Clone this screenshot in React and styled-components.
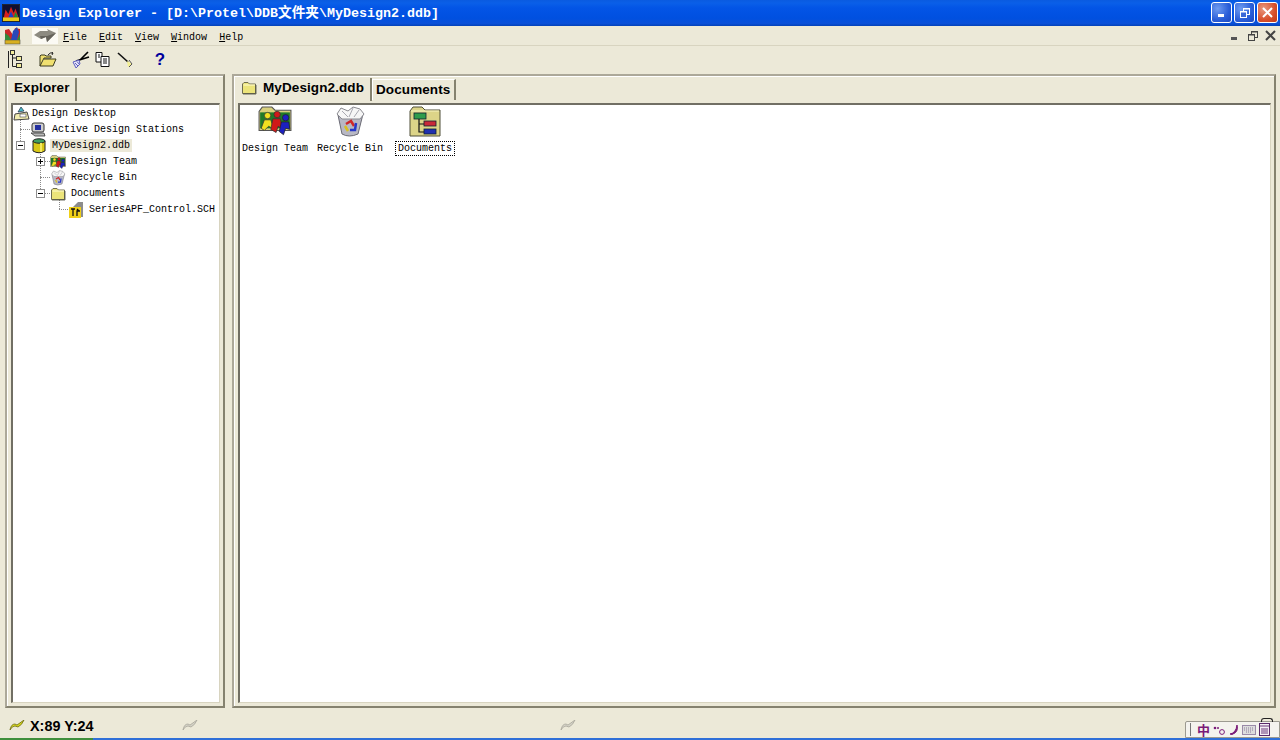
import React from "react";
import styled, { createGlobalStyle } from "styled-components";

const Global = createGlobalStyle`
  html, body { margin: 0; padding: 0; width: 1280px; height: 740px; overflow: hidden; background: #ece9d8; }
  #root { width: 1280px; height: 740px; }
  * { box-sizing: border-box; }
`;

const Shell = styled.div`
  width: 1280px; height: 740px; display: flex; flex-direction: column;
  background: #ece9d8; font-family: "Liberation Mono", "Noto Sans CJK SC", monospace; color: #000;
`;
const TitleBar = styled.div`
  height: 26px; flex: none; display: flex; align-items: center; padding: 0 2px 1px 2px;
  background: linear-gradient(180deg, #0a5be0 0%, #0a5fe8 12%, #0355e6 30%, #0050e0 70%, #0a50d8 90%, #0442b8 100%);
`;
const TitleText = styled.div`
  margin-left: 2px; flex: 1; color: #fff; font-weight: 700; font-size: 13.33px; white-space: pre;
  line-height: 16px;
  & > span { font-family: "Noto Sans CJK SC", sans-serif; font-size: 13.7px; }
`;
const WinBtns = styled.div`display: flex; gap: 2px;`;
const WinBtn = styled.div`
  width: 21px; height: 21px; border: 1px solid #fff; border-radius: 3px; display: flex; align-items: center; justify-content: center;
  background: ${p => p.$close ? "radial-gradient(circle at 30% 30%, #e89a80, #d8502c 60%, #c03a18)" : "radial-gradient(circle at 30% 30%, #6f9cf0, #2a5ed8 60%, #1c48c0)"};
`;
const MenuRow = styled.div`
  height: 20px; flex: none; display: flex; align-items: center; padding: 0 0 0 4px;
  border-bottom: 1px solid #d8d4c0;
`;
const Grip = styled.div`
  width: 26px; height: 16px; margin-left: 10px; background: #fbfaf4; display: flex; align-items: center; justify-content: center;
`;
const MenuItem = styled.span`
  font-size: 10px; margin-left: ${p => p.$ml || 12}px; padding-top: 4px; line-height: 12px; white-space: pre;
  & > u { text-underline-offset: 1px; }
`;
const MdiBtns = styled.div`margin-left: auto; display: flex; gap: 3px; align-items: center; padding-right: 2px;`;
const MdiBtn = styled.div`width: 15px; height: 15px; display: flex; align-items: center; justify-content: center;`;
const Toolbar = styled.div`
  height: 28px; flex: none; display: flex; align-items: center; padding-left: 6px; padding-bottom: 1px;
`;
const Tool = styled.div`width: 18px; height: 20px; margin-left: ${p => p.$ml || 0}px; display: flex; align-items: center; justify-content: center;
  color: #00009c; font: 700 17px "Liberation Sans", sans-serif;`;
const Main = styled.div`flex: 1; min-height: 0; display: flex; padding: 0 4px 0 5px; gap: 7px;`;
const Panel = styled.div`
  width: ${p => p.$w}; flex: ${p => p.$grow ? 1 : "none"}; display: flex; flex-direction: column;
  padding: 2px 3px 3px 2px;
  border-top: 2px solid #aca899; border-left: 2px solid #aca899; border-right: 2px solid #85826f; border-bottom: 2px solid #85826f;
  box-shadow: inset 1px 1px 0 #fff;
`;
const Tabs = styled.div`height: 23px; flex: none; display: flex; align-items: flex-end;`;
const Tab = styled.div`
  height: ${p => p.$active ? 23 : 21}px; display: flex; align-items: center;
  padding: 0 0 ${p => p.$active ? 4 : 1}px ${p => p.$pl || 5}px; gap: 6px;
  width: ${p => p.$w}px; flex: none; margin-bottom: ${p => p.$active ? 0 : 1}px;
  font: 700 13.5px "Liberation Sans", sans-serif; letter-spacing: .1px; white-space: pre;
  border-top: ${p => p.$active ? "0" : "1px solid #fff"}; border-left: ${p => p.$active ? "0" : "1px solid #fff"}; border-right: 2px solid #85826f;
`;
const Well = styled.div`
  flex: 1; min-height: 0; background: #fff; margin: 2px 0 0 2px;
  border-top: 2px solid #716f64; border-left: 2px solid #716f64; border-right: 1px solid #d8d4c0; border-bottom: 1px solid #d8d4c0;
`;
const Tree = styled.div`display: flex; flex-direction: column; padding: 1px 0 0 0; position: relative;`;
const TreeRow = styled.div`height: 16px; display: flex; align-items: center; padding-left: ${p => p.$x}px; position: relative;`;
const Label = styled.span`
  font-size: 10px; margin: 0 0 2px ${p => p.$ml || 0}px; padding: 0 ${p => p.$sel ? 2 : 1}px; line-height: 13px; white-space: pre; background: ${p => p.$sel ? "#ece9d8" : "transparent"};
`;
const Guide = styled.i`
  position: absolute; left: ${p => p.$x}px; top: ${p => p.$y}px; width: ${p => p.$w || 1}px; height: ${p => p.$h || 1}px;
  ${p => p.$w ? "border-top: 1px dotted #8a8a8a;" : "border-left: 1px dotted #8a8a8a;"}
`;
const Expander = styled.span`
  position: absolute; left: ${p => p.$x}px; top: 3px; width: 9px; height: 9px; background: #fff; border: 1px solid #8f8f8f; z-index: 1;
  &::before { content: ""; position: absolute; left: 1px; right: 1px; top: 3px; height: 1px; background: #000; }
  ${p => p.$plus ? `&::after { content: ""; position: absolute; top: 1px; bottom: 1px; left: 3px; width: 1px; background: #000; }` : ""}
`;
const IconGrid = styled.div`display: flex; gap: 5px; padding-top: 1px;`;
const IconCell = styled.div`width: 70px; display: flex; flex-direction: column; align-items: center;`;
const IconBox = styled.div`height: 35px; display: flex; align-items: flex-start; justify-content: center;`;
const IconLabel = styled.span`
  font-size: 10px; line-height: 13px; margin-top: 1px; white-space: pre; padding: 0 2px;
  outline: ${p => p.$focus ? "1px dotted #000" : "none"};
`;
const Status = styled.div`
  height: 30px; flex: none; display: flex; align-items: center; padding: 5px 0 0 9px; position: relative;
`;
const StatusText = styled.span`font: 700 14.4px "Liberation Sans", sans-serif; margin-left: 5px; width: 152px;`;
const Spacer = styled.div`width: ${p => p.$w}px; flex: none;`;
const ImeBar = styled.div`
  position: absolute; right: 0; bottom: 0; width: 95px; height: 17px; background: #f4f3ee; border: 1px solid #9c9a90; border-radius: 2px 0 0 0;
  display: flex; align-items: center; gap: 3px; padding-left: 4px; z-index: 2;
`;
const ImeHandle = styled.i`width: 2px; height: 13px; border-left: 1px solid #777; margin-right: 2px;`;
const ImeChar = styled.span`font: 700 13px "Noto Sans CJK SC", sans-serif; color: #7a1a78; line-height: 14px;`;
const ImeTab = styled.i`position: absolute; top: -4px; right: 6px; width: 12px; height: 4px; border: 1px solid #222; border-bottom: 0; border-radius: 3px 3px 0 0;`;
const TaskStrip = styled.div`height: 2px; flex: none; display: flex; background: #2f6fd8;`;
const Start = styled.div`width: 93px; background: #3f8f3c;`;

const Logo = ({ s = 18 }) => (
  <svg width={s} height={s} viewBox="0 0 20 20">
    <rect x="1" y="1" width="18" height="14" fill="#101030" />
    <path d="M2 15 L4 6 L7 11 L10 3 L13 10 L15 5 L18 14 V16 H2Z" fill="#d8201c" />
    <path d="M7 15 L10 8 L13 15Z" fill="#1c40c8" />
    <path d="M13 15 L15 9 L18 15Z" fill="#1c9030" />
    <rect x="1" y="15" width="18" height="4" fill="#e8c818" />
    <rect x="0.5" y="0.5" width="19" height="19" fill="none" stroke="#222" />
  </svg>
);
const MenuLogo = () => (
  <svg width="18" height="19" viewBox="0 0 18 19">
    <rect x="1" y="14" width="15" height="4" fill="#d8b020" stroke="#554" strokeWidth=".6" />
    <path d="M1 14 V4 L5 3 L9 9 L11 2 L16 3 V14Z" fill="#c82828" />
    <path d="M7 14 L9 5 L13 1 L15 6 L13 14Z" fill="#2848b8" />
    <path d="M1 14 V7 L5 10 L7 14Z" fill="#2f8a3a" />
    <path d="M13 14 L16 8 V14Z" fill="#2f8a3a" />
  </svg>
);
const ArrowIcon = () => (
  <svg width="24" height="14" viewBox="0 0 24 14">
    <path d="M1 6 L7 2 H15 L14 0 L23 4 L14 13 L13 8 L8 10Z" fill="#8c8a80" />
    <path d="M8 10 L13 8 L14 13 L23 4 L14 7 L7 7Z" fill="#64625a" />
  </svg>
);
const Folder = ({ s = 16, fill = "#ece47a" }) => (
  <svg width={s} height={s * 14 / 16} viewBox="0 0 16 14">
    <path d="M1.5 12.5 V3 L3 1.5 H7 L8.5 3 H14.5 V12.5Z" fill={fill} stroke="#6e6c50" />
    <path d="M2 13 H15 V4" fill="none" stroke="#4a4a3c" strokeWidth=".8" />
    <path d="M2.5 4 H14" stroke="#fffbd0" />
  </svg>
);
const People = ({ s = 16 }) => (
  <svg width={s} height={s * 28 / 32} viewBox="0 0 32 28">
    <path d="M1 23 V5 L4 1 H13 L16 4 H31 V23Z" fill="#d8d07c" stroke="#555" />
    <rect x="2" y="6" width="28" height="15" fill="#1f7a28" />
    <circle cx="9" cy="9" r="3" fill="#f0e020" stroke="#333" strokeWidth=".7" />
    <path d="M3 21 L6 13 H12 L15 22 L10 19 L6 23Z" fill="#f0e020" stroke="#333" strokeWidth=".7" />
    <circle cx="18" cy="8" r="3" fill="#d01818" stroke="#333" strokeWidth=".7" />
    <path d="M12 22 L14 12 H21 L23 22 L19 19 L17 25Z" fill="#d01818" stroke="#333" strokeWidth=".7" />
    <circle cx="26" cy="11" r="3" fill="#1c20c0" stroke="#222" strokeWidth=".7" />
    <path d="M20 24 L22 15 H29 L30 22 L26 21 L24 27Z" fill="#1c20c0" stroke="#222" strokeWidth=".7" />
  </svg>
);
const Bin = ({ s = 16 }) => (
  <svg width={s} height={s} viewBox="0 0 32 32">
    <path d="M4 9 L8 28 Q15 32 24 28 L29 8Z" fill="#b8b8c4" stroke="#6a6a74" />
    <path d="M3 8 L7 2 L14 5 L19 1 L26 3 L30 8 L26 13 H8Z" fill="#f6f6f6" stroke="#8a8a90" />
    <path d="M8 5 L14 11 M19 2 L15 11 M25 4 L20 11" stroke="#a8a8b0" />
    <path d="M12 18 L17 15 L20 20" fill="none" stroke="#d02828" strokeWidth="2.5" />
    <path d="M22 17 L21 24 L16 24" fill="none" stroke="#2838c8" strokeWidth="2.5" />
    <path d="M11 20 L14 25" fill="none" stroke="#d8c020" strokeWidth="2.5" />
  </svg>
);
const DocFolder = () => (
  <svg width="34" height="32" viewBox="0 0 34 32">
    <path d="M2 30 V5 L5 1 H14 L17 4 H32 V30Z" fill="#dcd488" stroke="#4e4e38" />
    <path d="M3 5 H31" stroke="#f8f4c0" />
    <rect x="6" y="7" width="12" height="6" fill="#2f9c4c" stroke="#123" strokeWidth=".8" />
    <rect x="16" y="15" width="12" height="5" fill="#c82838" stroke="#123" strokeWidth=".8" />
    <rect x="16" y="23" width="12" height="5" fill="#2030b0" stroke="#123" strokeWidth=".8" />
    <path d="M11 13 V26 H16 M11 18 H16" stroke="#111" fill="none" strokeWidth="1.2" />
  </svg>
);
const Desktop = () => (
  <svg width="18" height="16" viewBox="0 0 18 16">
    <path d="M1 14 L2 8 L14 6 L16 13Z" fill="#f2eeb0" stroke="#444" />
    <rect x="7" y="8" width="6" height="3" fill="#fff" stroke="#444" strokeWidth=".6" />
    <path d="M5 6 L8 1 L11 5Z" fill="#48b8c8" stroke="#234" strokeWidth=".7" />
  </svg>
);
const Station = () => (
  <svg width="18" height="16" viewBox="0 0 18 16">
    <rect x="3" y="1" width="12" height="9" rx="2" fill="#cfcfcf" stroke="#333" />
    <rect x="6" y="3" width="6" height="5" fill="#2430a0" />
    <path d="M2 11 H15 L16 14 H6Z" fill="#b8b8b8" stroke="#333" strokeWidth=".8" />
  </svg>
);
const Cylinder = () => (
  <svg width="14" height="16" viewBox="0 0 14 16">
    <path d="M1 3 V13 Q7 16.5 13 13 V3Z" fill="#d8c818" stroke="#222" />
    <ellipse cx="7" cy="3" rx="6" ry="2.2" fill="#40a060" stroke="#222" />
    <path d="M9 5 V14" stroke="#f4e860" strokeWidth="2" />
  </svg>
);
const Sch = () => (
  <svg width="16" height="16" viewBox="0 0 16 16">
    <path d="M3 6 L9 0 H14 V15 H9Z" fill="#8c8c8c" />
    <rect x="0" y="5" width="12" height="11" fill="#f0d018" />
    <path d="M2 7 H6 M4 7 V14 M8 7 L10 9 M8 14 V9 H11" stroke="#111" strokeWidth="1.3" fill="none" />
  </svg>
);
const TreeIcon = () => (
  <svg width="17" height="19" viewBox="0 0 17 19">
    <rect x="3.5" y="0.5" width="4" height="4" fill="#f4ee9c" stroke="#333" />
    <path d="M1.5 1 V18 M5.5 5 V16.5 H9 M5.5 8 H9" stroke="#222" fill="none" />
    <rect x="9.5" y="6.5" width="5" height="4" fill="#f4ee9c" stroke="#333" />
    <rect x="9.5" y="13.5" width="5" height="4" fill="#f4ee9c" stroke="#333" />
  </svg>
);
const OpenFolder = () => (
  <svg width="18" height="15" viewBox="0 0 18 15">
    <path d="M1 14 V4 L2 3 H6 L7 4 H12 V6 H5 L1 14 L14 14 L17 7 H5" fill="#f0e070" stroke="#3a3a20" />
    <path d="M9 3 Q11 0 14 1 M14 1 L12.5 0 M14 1 L13 3" stroke="#222" fill="none" />
  </svg>
);
const Cut = () => (
  <svg width="18" height="18" viewBox="0 0 18 18">
    <path d="M4 10 L17 6 M8 9 L16 1" stroke="#000" strokeWidth="1.7" />
    <path d="M1 11 L7 9 L8 13 L4 17Z" fill="#e4e4f8" stroke="#6060c0" />
    <path d="M3 12 L6 15 M5 10.5 L7 13" stroke="#6060c0" />
  </svg>
);
const Copy = () => (
  <svg width="15" height="15" viewBox="0 0 15 15">
    <path d="M1 .5 H7 V10 H1Z" fill="#fff" stroke="#111" />
    <path d="M6 4.5 H14 V14.5 H6Z" fill="#fff" stroke="#111" />
    <path d="M3 3 H5 M3 5 H5 M8 7 H12 M8 9 H12 M8 11 H12" stroke="#111" />
  </svg>
);
const Wand = () => (
  <svg width="16" height="16" viewBox="0 0 16 16">
    <path d="M1 1 L11 10" stroke="#111" strokeWidth="1.6" />
    <path d="M10 9 L15 12 L11 15Z" fill="#f4f090" />
    <path d="M12 8 L15 12 L12 15" fill="none" stroke="#555" />
  </svg>
);
const Flag = ({ c = "#d8d81c", d = "#6a6a10" }) => (
  <svg width="16" height="11" viewBox="0 0 16 11">
    <path d="M1 10 Q2 4 6 4 L8 5 L15 0 Q13 5 9 7 L6 6 Q3 6 1 10Z" fill={c} stroke={d} strokeWidth=".8" />
  </svg>
);

const Min = ({ c = "#fff" }) => <svg width="11" height="11" viewBox="0 0 11 11"><rect x="2" y="7" width="6" height="3" fill={c} /></svg>;
const Restore = ({ c = "#fff" }) => <svg width="12" height="12" viewBox="0 0 12 12" fill="none" stroke={c}><rect x="4.5" y="1.5" width="6" height="6" /><rect x="1.5" y="4.5" width="6" height="6" fill={c === "#fff" ? "#3a68d8" : "#ece9d8"} /><path d="M4 2 H11 M1 5 H8" strokeWidth="1" /></svg>;
const Cross = ({ c = "#fff", w = 2 }) => <svg width="13" height="13" viewBox="0 0 13 13" stroke={c} strokeWidth={w}><path d="M2 2 L11 11 M11 2 L2 11" /></svg>;

export default function App() {
  return (
    <Shell>
      <Global />
      <TitleBar>
        <Logo />
        <TitleText>Design Explorer - [D:\Protel\DDB<span>文件夹</span>\MyDesign2.ddb]</TitleText>
        <WinBtns>
          <WinBtn><Min /></WinBtn>
          <WinBtn><Restore /></WinBtn>
          <WinBtn $close><Cross /></WinBtn>
        </WinBtns>
      </TitleBar>
      <MenuRow>
        <MenuLogo />
        <Grip><ArrowIcon /></Grip>
        <MenuItem $ml={5}><u>F</u>ile</MenuItem>
        <MenuItem><u>E</u>dit</MenuItem>
        <MenuItem><u>V</u>iew</MenuItem>
        <MenuItem><u>W</u>indow</MenuItem>
        <MenuItem><u>H</u>elp</MenuItem>
        <MdiBtns>
          <MdiBtn><Min c="#555" /></MdiBtn>
          <MdiBtn><Restore c="#444" /></MdiBtn>
          <MdiBtn><Cross c="#444" /></MdiBtn>
        </MdiBtns>
      </MenuRow>
      <Toolbar>
        <Tool><TreeIcon /></Tool>
        <Tool $ml={15}><OpenFolder /></Tool>
        <Tool $ml={15}><Cut /></Tool>
        <Tool $ml={3}><Copy /></Tool>
        <Tool $ml={5}><Wand /></Tool>
        <Tool $ml={17}>?</Tool>
      </Toolbar>
      <Main>
        <Panel $w="220px">
          <Tabs><Tab $active $w={68} $pl={5}>Explorer</Tab></Tabs>
          <Well>
            <Tree>
              <Guide $x={7} $y={15} $h={21} />
              <Guide $x={7} $y={24} $w={10} />
              <Guide $x={27} $y={45} $h={43} />
              <Guide $x={27} $y={56} $w={10} />
              <Guide $x={27} $y={72} $w={10} />
              <Guide $x={27} $y={88} $w={10} />
              <Guide $x={46} $y={94} $h={10} />
              <Guide $x={46} $y={104} $w={9} />
              <TreeRow $x={0}><Desktop /><Label>Design Desktop</Label></TreeRow>
              <TreeRow $x={16}><Station /><Label $ml={4}>Active Design Stations</Label></TreeRow>
              <TreeRow $x={19}><Expander $x={3} /><Cylinder /><Label $sel $ml={4}>MyDesign2.ddb</Label></TreeRow>
              <TreeRow $x={37}><Expander $plus $x={23} /><People /><Label $ml={4}>Design Team</Label></TreeRow>
              <TreeRow $x={37}><Bin /><Label $ml={4}>Recycle Bin</Label></TreeRow>
              <TreeRow $x={37}><Expander $x={23} /><Folder /><Label $ml={4}>Documents</Label></TreeRow>
              <TreeRow $x={56}><Sch /><Label $ml={3}>SeriesAPF_Control.SCH</Label></TreeRow>
            </Tree>
          </Well>
        </Panel>
        <Panel $grow>
          <Tabs>
            <Tab $active $w={136} $pl={5}><Folder />MyDesign2.ddb</Tab>
            <Tab $w={84} $pl={3}>Documents</Tab>
          </Tabs>
          <Well>
            <IconGrid>
              <IconCell>
                <IconBox><People s={34} /></IconBox>
                <IconLabel>Design Team</IconLabel>
              </IconCell>
              <IconCell>
                <IconBox><Bin s={32} /></IconBox>
                <IconLabel>Recycle Bin</IconLabel>
              </IconCell>
              <IconCell>
                <IconBox><DocFolder /></IconBox>
                <IconLabel $focus>Documents</IconLabel>
              </IconCell>
            </IconGrid>
          </Well>
        </Panel>
      </Main>
      <Status>
        <Flag />
        <StatusText>X:89 Y:24</StatusText>
        <Flag c="#d4d2c6" d="#a8a69a" />
        <Spacer $w={362} />
        <Flag c="#d4d2c6" d="#a8a69a" />
        <ImeBar>
          <ImeTab />
          <ImeHandle />
          <ImeChar>中</ImeChar>
          <svg width="13" height="10" viewBox="0 0 13 10"><circle cx="2" cy="3" r="1.3" fill="#7a1a78" /><circle cx="5" cy="3" r="1" fill="#7a1a78" /><circle cx="9" cy="7" r="2.4" fill="none" stroke="#7a1a78" /></svg>
          <svg width="10" height="11" viewBox="0 0 10 11"><path d="M1 10 Q7 9 8 1 Q10 8 3 10.5Z" fill="#7a1a78" stroke="#7a1a78" /></svg>
          <svg width="14" height="10" viewBox="0 0 14 10"><rect x=".5" y=".5" width="13" height="9" fill="#ddd" stroke="#9a8aa8" /><path d="M2 3 H12 M2 5 H12 M4 7 H10" stroke="#8a7a9a" strokeDasharray="1 1" /></svg>
          <svg width="11" height="13" viewBox="0 0 11 13"><rect x=".5" y=".5" width="10" height="12" fill="#f4eef4" stroke="#5a2a6a" /><path d="M1 3 H10 M2 6 H9 M2 8 H9 M2 10 H9" stroke="#6a3a7a" /></svg>
        </ImeBar>
      </Status>
      <TaskStrip><Start /></TaskStrip>
    </Shell>
  );
}
